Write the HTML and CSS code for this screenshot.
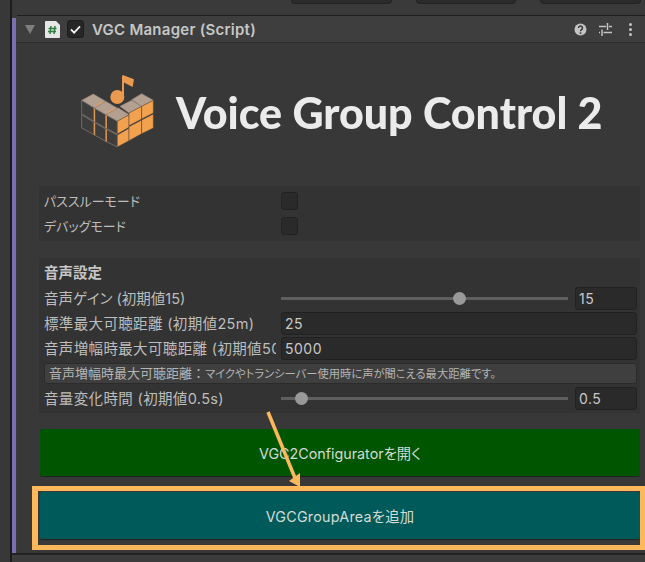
FILE: index.html
```html
<!DOCTYPE html>
<html lang="ja">
<head>
<meta charset="utf-8">
<title>VGC Manager</title>
<link rel="stylesheet" href="styles.css">
</head>
<body>
<div class="shell">
  <div class="gutter"></div>
  <div class="inspector">
    <div class="top-strip">
      <span class="top-btn"></span><span class="top-btn"></span><span class="top-btn"></span>
    </div>
    <div class="component">
      <div class="accent"></div>
      <div class="body">
        <header class="header">
          <svg class="fold" viewBox="0 0 10 9"><path d="M0 0H10L5 9Z"/></svg>
          <svg class="script" viewBox="0 0 15 17">
            <path d="M1 0H11L15 4V16a1 1 0 0 1-1 1H1a1 1 0 0 1-1-1V1a1 1 0 0 1 1-1Z" fill="#e6e6e6"/>
            <path d="M6 5 5 13M10 5 9 13M3.500 7.500H11.500M3 10.500H11" stroke="#2f7d3f" stroke-width="1.500" fill="none"/>
          </svg>
          <span class="check"><svg viewBox="0 0 12 10"><path d="M1 5 4.500 8.500 11 1.500" stroke="#f0f0f0" stroke-width="2" fill="none"/></svg></span>
          <span class="title">VGC Manager (Script)</span>
          <span class="header-icons">
            <svg class="hi" viewBox="0 0 13 13"><circle cx="6.500" cy="6.500" r="6" fill="#c4c4c4"/><path d="M4.500 5a2 2 0 1 1 3 1.700c-.7.400-1 .8-1 1.500" stroke="#383838" stroke-width="1.500" fill="none"/><rect x="5.700" y="9.300" width="1.600" height="1.600" fill="#383838"/></svg>
            <svg class="hi" viewBox="0 0 13 13"><path d="M0 3.500H7M10 3.500H13M8.500 0V7M0 9.500H1M4.500 9.500H13M3 6.500V13" stroke="#c4c4c4" stroke-width="1.500" fill="none"/></svg>
            <svg class="hi kebab" viewBox="0 0 3 13"><circle cx="1.500" cy="1.500" r="1.500" fill="#c4c4c4"/><circle cx="1.500" cy="6.500" r="1.500" fill="#c4c4c4"/><circle cx="1.500" cy="11.500" r="1.500" fill="#c4c4c4"/></svg>
          </span>
        </header>

        <div class="content">
          <div class="logo">
            <svg class="logo-mark" viewBox="60 40 225 225">
              <g fill="#b3a091" stroke="#93857a" stroke-width="2" stroke-linejoin="round">
                <path d="M65 122 100 103 137 125 102 145Z"/>
                <path d="M102 145 137 125 175 147 137 165Z"/>
                <path d="M137 165 175 145 207 165 172 185Z"/>
                <path d="M180 140 215 122 245 140 207 160Z"/>
                <path d="M215 120 245 102 280 122 245 140Z"/>
              </g>
              <g fill="#3d3d3d" stroke="#8d8177" stroke-width="2" stroke-linejoin="round">
                <path d="M65 122 102 145V185L65 162Z"/>
                <path d="M65 165 102 188V225L65 205Z"/>
                <path d="M102 145 137 165V205L102 185Z"/>
                <path d="M102 188 137 208V245L102 225Z"/>
                <path d="M137 165 172 185V223L137 205Z"/>
                <path d="M137 208 172 226V262L137 245Z"/>
              </g>
              <path d="M104 147V186M104 190V226M139 167V206M139 210V246M105 140 130 127M140 160 165 147" stroke="#f2a14f" stroke-width="3" fill="none"/>
              <g fill="#f2a14f" stroke="#4a4038" stroke-width="1.500" stroke-linejoin="round">
                <path d="M172 185 207 165V203L172 223Z"/>
                <path d="M172 226 207 206V243L172 262Z"/>
                <path d="M207 160 245 140V178L207 198Z"/>
                <path d="M207 201 245 181V222L207 243Z"/>
                <path d="M245 140 280 122V160L245 178Z"/>
                <path d="M245 181 280 163V205L245 222Z"/>
              </g>
              <circle cx="172" cy="112" r="21" fill="#ea9a4e"/>
              <path d="M189 115V48" stroke="#ea9a4e" stroke-width="6"/>
              <path d="M188 46 222 59 218 82 190 68Z" fill="#ea9a4e"/>
            </svg>
            <span class="logo-text">Voice Group Control 2</span>
          </div>

          <section class="box box-toggles">
            <div class="row toggle-row"><label class="label">パススルーモード</label><span class="toggle"></span></div>
            <div class="row toggle-row"><label class="label">デバッグモード</label><span class="toggle"></span></div>
          </section>

          <section class="box box-audio">
            <h3 class="heading">音声設定</h3>
            <div class="row field-row">
              <label class="label label-kana">音声ゲイン (初期値15)</label>
              <span class="slider"><i class="thumb" style="left:172px"></i></span>
              <span class="input small">15</span>
            </div>
            <div class="row field-row">
              <label class="label">標準最大可聴距離 (初期値25m)</label>
              <span class="input wide">25</span>
            </div>
            <div class="row field-row">
              <label class="label">音声増幅時最大可聴距離 (初期値5000m)</label>
              <span class="input wide">5000</span>
            </div>
            <div class="help"><span class="help-term">音声増幅時最大可聴距離：</span>マイクやトランシーバー使用時に声が聞こえる最大距離です。</div>
            <div class="row field-row">
              <label class="label">音量変化時間 (初期値0.5s)</label>
              <span class="slider"><i class="thumb" style="left:14px"></i></span>
              <span class="input small">0.5</span>
            </div>
          </section>

          <button class="action green">VGC2Configuratorを開く</button>
          <div class="highlight">
            <button class="action teal">VGCGroupAreaを追加</button>
          </div>
        </div>
      </div>
    </div>
    <div class="footer"></div>
  </div>
</div>
<svg class="arrow" viewBox="0 0 645 562"><path d="M268 412 295 478" stroke="#fdb85c" stroke-width="3.500" fill="none"/><path d="M289 481 300 473 300 487Z" fill="#fdb85c"/></svg>
</body>
</html>
```
FILE: styles.css
```css
* { box-sizing: border-box; }
html, body { margin: 0; padding: 0; }
body {
  position: relative;
  width: 645px;
  height: 562px;
  overflow: hidden;
  background: #3a3a3a;
  font-family: Inter, "Noto Sans CJK JP", sans-serif;
  font-size: 13px;
  color: #c4c4c4;
  font-feature-settings: "palt";
}
.shell { display: flex; height: 562px; }
.gutter { width: 12px; background: #383838; border-right: 2px solid #1c1c1c; flex: none; }
.inspector { flex: 1; display: flex; flex-direction: column; min-width: 0; }

.top-strip { height: 15px; flex: none; display: flex; gap: 24px; padding-left: 279px; background: #3a3a3a; }
.top-btn { width: 101px; height: 4px; background: #2b2b2b; border: 1px solid #232323; border-top: 0; border-radius: 0 0 4px 4px; }
.top-btn:nth-child(2) { width: 100px; }

.component { flex: none; height: 538px; display: flex; }
.accent { width: 4px; margin-top: 3px; background: #7b6fb0; flex: none; }
.body { flex: 1; min-width: 0; border-top: 1px solid #1f1f1f; margin-left: 1px; }

.header {
  height: 27px;
  display: flex;
  align-items: center;
  background: #3e3e3e;
  border-bottom: 1px solid #2d2d2d;
  margin-left: -1px;
  padding-left: 9px;
}
.fold { width: 10px; height: 9px; fill: #7e7e7e; flex: none; }
.script { width: 15px; height: 17px; margin-left: 10px; flex: none; }
.check {
  width: 17px; height: 18px; margin-left: 7px; flex: none;
  display: flex; align-items: center; justify-content: center;
  background: #262626; border: 1px solid #1c1c1c; border-radius: 3px;
}
.check svg { width: 11px; height: 9px; }
.title { margin-left: 8px; font-size: 15px; font-weight: 600; color: #c6c6c6; letter-spacing: .25px; white-space: nowrap; }
.header-icons { margin-left: auto; display: flex; align-items: center; padding-right: 13px; gap: 12px; }
.hi { width: 13px; height: 13px; flex: none; }
.kebab { width: 3px; margin-left: 5px; }

.content { padding: 0 5px 0 22px; background: #383838; height: 510px; }
.logo { height: 143px; display: flex; align-items: flex-start; filter: blur(.3px); }
.logo-mark { width: 75px; height: 75px; margin: 30px 0 0 41px; flex: none; }
.logo-text {
  margin: 40px 0 0 21px;
  font-family: Lato, sans-serif;
  font-weight: 900;
  font-size: 43px;
  line-height: 60px;
  color: #ebebeb;
  white-space: nowrap;
}

.box { background: #333333; padding: 0 3px 0 5px; }
.box-toggles { height: 55px; padding-top: 2px; }
.box-audio { height: 155px; margin-top: 17px; padding-top: 6px; }
.row { display: flex; align-items: center; }
.toggle-row { height: 25px; }
.label { width: 232px; flex: none; overflow: hidden; white-space: nowrap; color: #bdbdbd; font-size: 14.500px; line-height: 20px; letter-spacing: .35px; }
.label-kana { letter-spacing: 0; }
.toggle-row .label { width: 237px; font-size: 13px; letter-spacing: 0; }
.toggle { width: 17px; height: 18px; background: #2a2a2a; border: 1px solid #222; border-radius: 3px; }
.heading { margin: 0; height: 23px; line-height: 18px; font-size: 14.500px; font-weight: 700; color: #c6c6c6; }
.field-row { height: 23px; margin-top: 2px; gap: 5px; }
.box-audio .heading + .field-row { margin-top: 0; }
.slider { position: relative; width: 287px; height: 3px; background: #5f5f5f; flex: none; }
.thumb { position: absolute; top: -5px; width: 13px; height: 13px; border-radius: 50%; background: #999; }
.input {
  height: 23px;
  line-height: 22px;
  padding-left: 3px;
  background: #2a2a2a;
  border: 1px solid #212121;
  border-radius: 3px;
  color: #c8c8c8;
  font-size: 14px;
  letter-spacing: .5px;
  flex: none;
}
.input.small { width: 62px; margin-left: 2px; }
.input.wide { width: 356px; }
.help {
  margin-top: 3px;
  height: 21px;
  line-height: 19px;
  padding-left: 4px;
  background: #3f3f3f;
  border: 1px solid #2b2b2b;
  border-radius: 3px;
  font-size: 11.300px;
  color: #b4b4b4;
  white-space: nowrap;
}
.help-term { font-size: 13px; font-feature-settings: normal; }
.help + .field-row { margin-top: 3px; }

.action {
  display: block;
  width: 600px;
  height: 48px;
  padding: 0;
  border: 0;
  border-bottom: 1px solid #222;
  border-radius: 3px;
  font-family: inherit;
  font-feature-settings: inherit;
  font-size: 14.300px;
  color: #d4dcd4;
}
.green { margin: 16px 0 0 1px; background: #005500; }
.teal { background: #005a5a; letter-spacing: .25px; padding-bottom: 1px; }
.highlight { position: relative; margin: 15px 0 0 1px; }
.highlight::before {
  content: "";
  position: absolute;
  left: -8px; right: -5px; top: -6px; bottom: -10px;
  border: solid #fdb85c;
  border-width: 5px 5px 5px 6px;
  pointer-events: none;
}

.footer { flex: 1; background: #3c3c3c; border-top: 2px solid #222; }
.arrow { position: absolute; left: 0; top: 0; width: 645px; height: 562px; pointer-events: none; }
```
